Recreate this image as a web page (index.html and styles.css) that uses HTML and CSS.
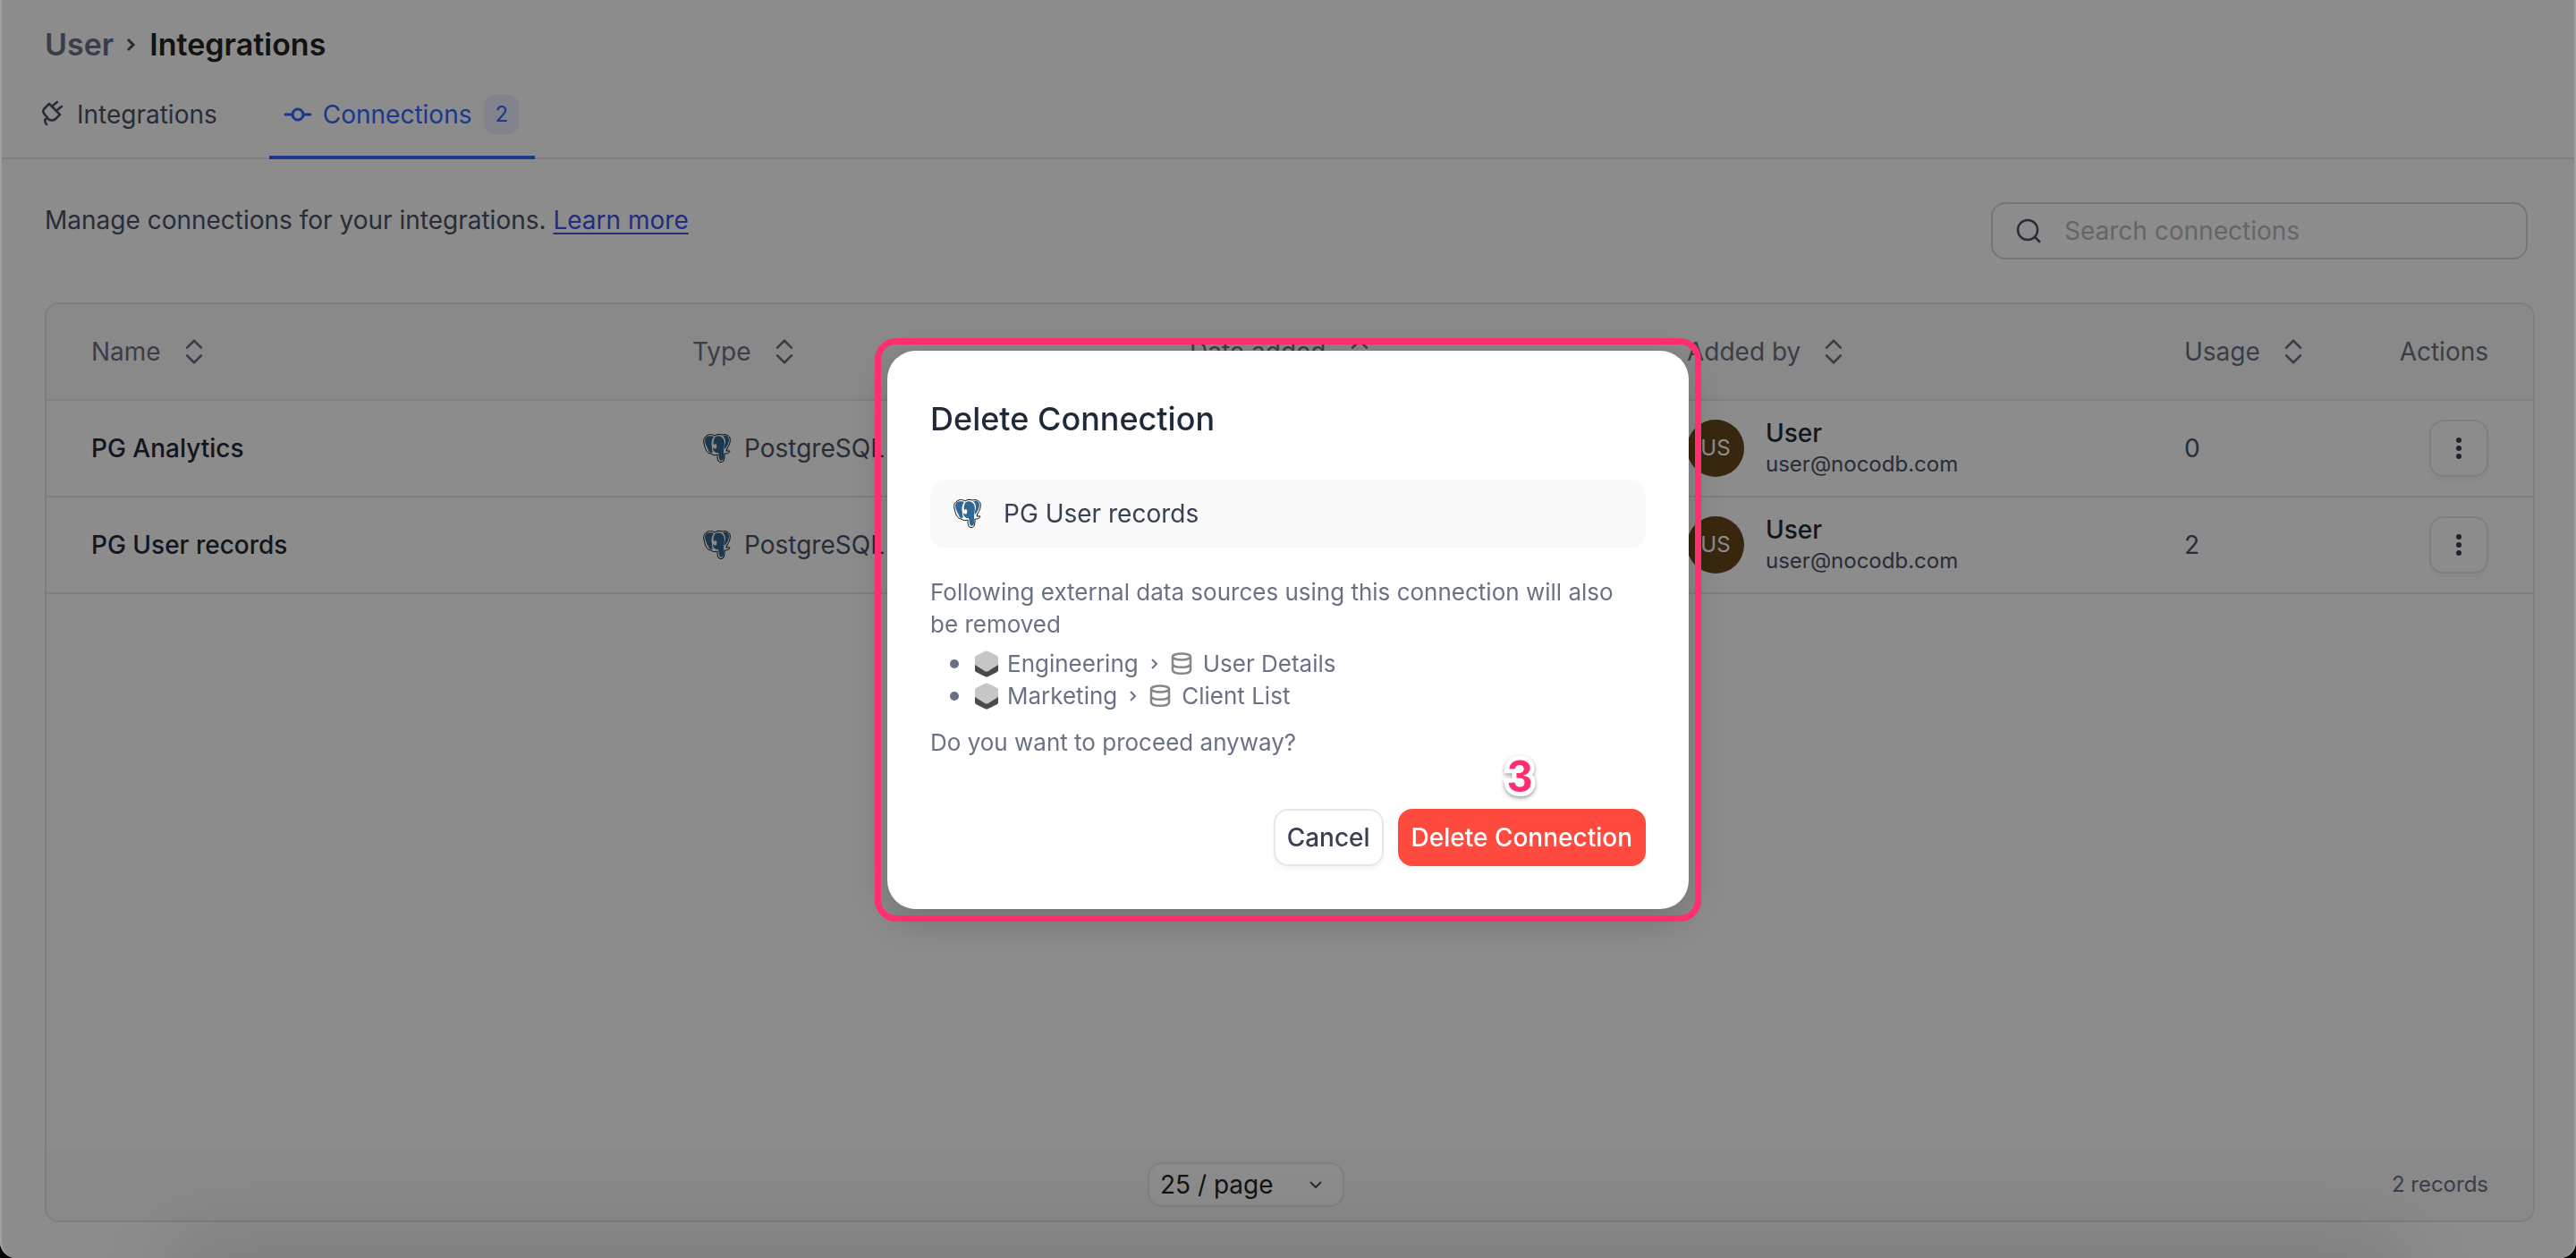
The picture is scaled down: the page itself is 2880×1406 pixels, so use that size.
FILE: index.html
```html
<!DOCTYPE html>
<html lang="en">
<head>
<meta charset="utf-8">
<title>Integrations</title>
<link rel="stylesheet" href="styles.css">
</head>
<body>
<svg class="sprite" aria-hidden="true">
  <symbol id="sort" viewBox="0 0 24 32"><path d="M3 11l9-9 9 9M3 21l9 9 9-9" fill="none" stroke="currentColor" stroke-width="3" stroke-linecap="round" stroke-linejoin="round"/></symbol>
  <symbol id="pg" viewBox="0 0 32 34">
    <path d="M4 3C7 1 10 1 13 3c3-2 5-2 8-1 4-1 7 0 9 3 1 5-1 9-3 12l-1 3 4 0c-1 3-4 3-6 3 0 3 0 5-1 8-1 2-5 2-6 0-1-2-1-5-1-7-2 1-5 1-7-1C4 23 2 17 1 11 0 8 1 5 4 3Z" fill="#fff" stroke="#111" stroke-width="1"/>
    <g fill="#336791">
      <path d="M4 4c2-1 6-1 8 0-3 4-3 8-2 12 0 2 0 4 1 5-2 2-4 1-5-2C3 13 0 7 4 4Z"/>
      <path d="M13 5c3-3 8-2 10 2 2 5 0 8 0 13v8c-1 4-5 3-5 0l-1-6c-4 0-6-2-6-6 2 2 4 2 4 0 1-2 0-3-1-4l-2 1c-1-3 0-5 1-8Z"/>
      <path d="M22 3c4-1 7 0 7 4 0 4-2 8-5 11-1-3 1-5 1-8 0-3-1-5-3-7Z"/>
    </g>
  </symbol>
  <symbol id="dots" viewBox="0 0 24 24"><g fill="currentColor"><circle cx="12" cy="3" r="3"/><circle cx="12" cy="12" r="3"/><circle cx="12" cy="21" r="3"/></g></symbol>
  <symbol id="cube" viewBox="0 0 26 30"><path d="M0 14v8q0 1 1 2l10 5q2 1 4 0l10-5q1-1 1-2v-8z" fill="#4a4a4a"/><path d="M11 1q2-1 4 0l10 5q1 1 1 2v8l-11 7q-2 1-4 0L0 16V8q0-1 1-2z" fill="#c6c6c6"/></symbol>
  <symbol id="db" viewBox="0 0 24 26"><g fill="none" stroke="#868682" stroke-width="2.500"><ellipse cx="12" cy="5" rx="10" ry="3.500"/><path d="M2 5v15c0 5 20 5 20 0V5M2 13c0 5 20 5 20 0"/></g></symbol>
</svg>

<main class="app">
  <header class="top">
    <nav class="crumbs" aria-label="Breadcrumb">
      <a href="#">User</a>
      <svg class="crumb-sep" viewBox="0 0 12 20"><path d="M2 4l6 6-6 6" fill="none" stroke="currentColor" stroke-width="3"/></svg>
      <h1>Integrations</h1>
    </nav>
    <nav class="tabs">
      <button class="tab" type="button">
        <svg class="tab-icon" viewBox="0 0 32 32"><g fill="none" stroke="currentColor" stroke-width="2.500" stroke-linecap="round" stroke-linejoin="round"><path d="M13 4l12 12-5 5c-2 2-6 2-8 0l-4-5c-2-2-2-4-1-6zM17 6l5-4M22 11l5-4M11 19l-2 2c-2 2 0 4 1 6"/></g></svg>
        Integrations
      </button>
      <button class="tab active" type="button">
        <svg class="tab-icon" viewBox="0 0 32 32"><g fill="none" stroke="currentColor" stroke-width="3" stroke-linecap="round"><circle cx="16" cy="16" r="6"/><path d="M2 16h8M22 16h8"/></g></svg>
        Connections <span class="count">2</span>
      </button>
    </nav>
  </header>

  <section class="content">
    <div class="toolbar">
      <p>Manage connections for your integrations. <a href="#">Learn more</a></p>
      <label class="search">
        <svg viewBox="0 0 28 28"><g fill="none" stroke="currentColor" stroke-width="2.500" stroke-linecap="round"><circle cx="13" cy="13" r="11"/><path d="M21 21l5 5"/></g></svg>
        <input type="search" placeholder="Search connections" aria-label="Search connections">
      </label>
    </div>

    <div class="panel">
      <table>
        <colgroup><col class="c-name"><col class="c-type"><col class="c-date"><col class="c-by"><col class="c-usage"><col class="c-act"></colgroup>
        <thead><tr>
          <th><span>Name<svg class="sort"><use href="#sort"/></svg></span></th>
          <th><span>Type<svg class="sort"><use href="#sort"/></svg></span></th>
          <th><span>Date added<svg class="sort"><use href="#sort"/></svg></span></th>
          <th><span>Added by<svg class="sort"><use href="#sort"/></svg></span></th>
          <th><span>Usage<svg class="sort"><use href="#sort"/></svg></span></th>
          <th class="end">Actions</th>
        </tr></thead>
        <tbody>
          <tr>
            <td class="name">PG Analytics</td>
            <td><div class="type"><svg class="pg"><use href="#pg"/></svg>PostgreSQL</div></td>
            <td></td>
            <td><div class="person"><span class="avatar">US</span><div><strong>User</strong><small>user@nocodb.com</small></div></div></td>
            <td>0</td>
            <td class="end"><button class="more" type="button" aria-label="Actions"><svg><use href="#dots"/></svg></button></td>
          </tr>
          <tr>
            <td class="name">PG User records</td>
            <td><div class="type"><svg class="pg"><use href="#pg"/></svg>PostgreSQL</div></td>
            <td></td>
            <td><div class="person"><span class="avatar">US</span><div><strong>User</strong><small>user@nocodb.com</small></div></div></td>
            <td>2</td>
            <td class="end"><button class="more" type="button" aria-label="Actions"><svg><use href="#dots"/></svg></button></td>
          </tr>
        </tbody>
      </table>
      <footer class="pager">
        <span class="select">
          <select aria-label="Page size"><option>25 / page</option></select>
          <svg viewBox="0 0 16 10"><path d="M2 2l6 6 6-6" fill="none" stroke="currentColor" stroke-width="2"/></svg>
        </span>
        <span class="records">2 records</span>
      </footer>
    </div>
  </section>
</main>

<div class="mask">
  <div class="ring">
    <section class="dialog" role="dialog" aria-modal="true" aria-labelledby="dialog-title">
      <h2 id="dialog-title">Delete Connection</h2>
      <div class="item"><svg class="pg"><use href="#pg"/></svg>PG User records</div>
      <div class="message">
        <p>Following external data sources using this connection will also be removed</p>
        <ul>
          <li><svg class="cube"><use href="#cube"/></svg>Engineering<svg class="chev" viewBox="0 0 8 14"><path d="M1 2l5 5-5 5" fill="none" stroke="currentColor" stroke-width="2"/></svg><svg class="db"><use href="#db"/></svg>User Details</li>
          <li><svg class="cube"><use href="#cube"/></svg>Marketing<svg class="chev" viewBox="0 0 8 14"><path d="M1 2l5 5-5 5" fill="none" stroke="currentColor" stroke-width="2"/></svg><svg class="db"><use href="#db"/></svg>Client List</li>
        </ul>
        <p>Do you want to proceed anyway?</p>
      </div>
      <div class="buttons">
        <button class="btn" type="button">Cancel</button>
        <button class="btn danger" type="button">Delete Connection<span class="step">3</span></button>
      </div>
    </section>
  </div>
</div>
</body>
</html>
```
FILE: styles.css
```css
* { box-sizing: border-box; }
html { background: #000; }
body {
  margin: 0;
  height: 100vh;
  color: #4a5268;
  font: 28px/40px Inter, "Noto Sans", sans-serif;
  overflow: hidden;
}
h1, h2, p, ul { margin: 0; padding: 0; }
button, input, select { font: inherit; color: inherit; }
svg { flex: none; }
.sprite { display: none; }

.app {
  display: flex;
  flex-direction: column;
  height: 100vh;
  background: #fff;
  padding: 0 2px;
  border-radius: 0 0 18px 18px;
}
.top { border-bottom: 2px solid #e7e7e9; }
.crumbs {
  display: flex;
  align-items: center;
  gap: 14px;
  padding: 30px 48px 0;
  font-size: 34px;
}
.crumbs a { color: #6a7184; text-decoration: none; font-weight: 600; }
.crumbs h1 { font-size: inherit; font-weight: 600; color: #232323; }
.crumb-sep { width: 12px; height: 20px; color: #4a5268; }
.tabs { display: flex; gap: 28px; padding-left: 10px; }
.tab {
  display: flex;
  align-items: center;
  height: 108px;
  gap: 12px;
  padding: 20px 30px 8px;
  border: 0;
  border-bottom: 4px solid transparent;
  background: none;
  margin-bottom: -2px;
}
.tab.active {
  padding: 20px 18px 8px 16px;
  color: #3366ff;
  border-bottom-color: #3366ff;
}
.tab-icon { width: 32px; height: 32px; }
.count {
  padding: 2px 12px;
  margin-left: 2px;
  border-radius: 12px;
  background: #ebf0ff;
  font-size: 24px;
}

.content {
  flex: 1;
  display: flex;
  flex-direction: column;
  padding: 48px 44px 40px 48px;
}
.toolbar { display: flex; justify-content: space-between; margin-bottom: 48px; padding-right: 8px; }
.toolbar a { color: #4351e8; text-underline-offset: 4px; }
.search {
  display: flex;
  align-items: center;
  gap: 26px;
  width: 600px;
  height: 64px;
  padding: 0 26px;
  border: 2px solid #d5d5d9;
  border-radius: 16px;
}
.search svg { width: 28px; height: 28px; }
.search input { flex: 1; min-width: 0; padding: 0; border: 0; background: none; outline: 0; }
.search input::placeholder { color: #b9b9bd; opacity: 1; }

.panel {
  flex: 1;
  display: flex;
  flex-direction: column;
  justify-content: space-between;
  border: 2px solid #e7e7e9;
  border-radius: 16px;
  overflow: hidden;
}
table { width: 100%; table-layout: fixed; border-collapse: separate; border-spacing: 0; }
th, td { height: 108px; padding: 0; border-bottom: 2px solid #e7e7e9; text-align: left; }
th { background: #f9f9fa; color: #6a7184; font-weight: 400; }
th:first-child, td:first-child { padding-left: 50px; }
th:last-child, td:last-child { padding-right: 50px; }
th.end, td.end { text-align: right; }
.c-name { width: 722px; }
.c-type { width: 556px; }
.c-date { width: 556px; }
.c-by { width: 556px; }
th span { display: flex; align-items: center; gap: 26px; }
.sort { width: 22px; height: 28px; }
.name { color: #1f293a; font-weight: 500; }
.type { display: flex; align-items: center; gap: 14px; padding-left: 12px; }
.pg { width: 32px; height: 34px; }
.person { display: flex; align-items: center; gap: 24px; }
.person strong, .person small { display: block; }
.person strong { line-height: 36px; font-weight: 500; color: #1f293a; }
.person small { line-height: 34px; font-size: 24px; }
.avatar {
  width: 64px;
  height: 64px;
  border-radius: 50%;
  background: #67481a;
  color: #fff;
  font-size: 24px;
  line-height: 64px;
  text-align: center;
}
.more {
  display: inline-flex;
  align-items: center;
  justify-content: center;
  width: 66px;
  height: 64px;
  padding: 0;
  vertical-align: middle;
  border: 2px solid #e7e7e9;
  border-radius: 16px;
  background: #fff;
  box-shadow: 0 4px 4px rgb(0 0 0 / 4%);
  color: #374151;
}
.more svg { width: 24px; height: 24px; }
.pager {
  display: grid;
  grid-template-columns: 1fr auto 1fr 48px;
  align-items: center;
  height: 80px;
  padding-right: 50px;
  background: #f9f9fa;
}
.select {
  grid-column: 2;
  display: flex;
  align-items: center;
  width: 220px;
  height: 50px;
  padding: 0 22px 0 12px;
  border: 2px solid #e7e7e9;
  border-radius: 16px;
  background: #fff;
}
.select select { flex: 1; appearance: none; padding: 0; border: 0; background: none; color: #232323; }
.select svg { width: 16px; height: 10px; }
.records { grid-column: 3 / 5; text-align: right; font-size: 24px; color: #6a7184; }

.mask {
  position: fixed;
  inset: 0;
  display: grid;
  place-items: center;
  padding-top: 2px;
  overflow: hidden;
  border: 2px solid rgb(255 255 255 / 18%);
  border-width: 0 2px;
  border-radius: 0 0 18px 18px;
  background: rgb(0 0 0 / 45%);
}
/* soft shade along the bottom edge of the window */
.mask::after {
  content: "";
  position: absolute;
  inset: 100% 200px auto;
  height: 40px;
  box-shadow: 0 0 100px 16px rgb(0 0 0 / 16%);
}
.ring { position: relative; padding: 14px; }
.ring::after {
  content: "";
  position: absolute;
  inset: 0;
  border: 7px solid #ff2e6e;
  border-radius: 24px;
  pointer-events: none;
}
.dialog {
  width: 896px;
  padding: 48px;
  border-radius: 32px;
  background: #fff;
  box-shadow: 0 12px 48px rgb(0 0 0 / 22%);
}
.dialog h2 { font-size: 36px; line-height: 56px; font-weight: 500; color: #1f293a; }
.item {
  display: flex;
  align-items: center;
  gap: 24px;
  height: 76px;
  margin: 40px 0 32px;
  padding: 0 26px;
  border-radius: 16px;
  background: #f9f9fa;
  color: #374151;
}
.message { font-size: 26px; line-height: 36px; color: #6a7184; }
.message ul { margin: 8px 0 16px; list-style: none; }
.message li { display: flex; align-items: center; padding-left: 22px; }
.message li::before {
  content: "";
  width: 10px;
  height: 10px;
  margin-right: 18px;
  border-radius: 50%;
  background: currentColor;
}
.cube { width: 26px; height: 30px; margin-right: 10px; }
.chev { width: 8px; height: 14px; margin: 0 14px; }
.db { width: 24px; height: 26px; margin-right: 12px; }
.buttons { display: flex; justify-content: flex-end; gap: 16px; margin-top: 56px; }
.btn {
  position: relative;
  height: 64px;
  padding: 0 13px;
  border: 2px solid #e7e7e9;
  border-radius: 16px;
  background: #fff;
  box-shadow: 0 4px 4px rgb(0 0 0 / 4%);
  color: #374151;
  font-weight: 500;
}
.danger { background: #ff4a3f; border-color: #ff4a3f; color: #fff; }
/* numbered marker above the button */
.step {
  position: absolute;
  left: 0;
  right: 4px;
  bottom: 70px;
  color: #ff2e6e;
  font: bold 50px/56px "Liberation Sans", sans-serif;
  -webkit-text-stroke: 10px #fff;
  paint-order: stroke fill;
  filter: drop-shadow(0 2px 2px rgb(0 0 0 / 40%));
}
```
